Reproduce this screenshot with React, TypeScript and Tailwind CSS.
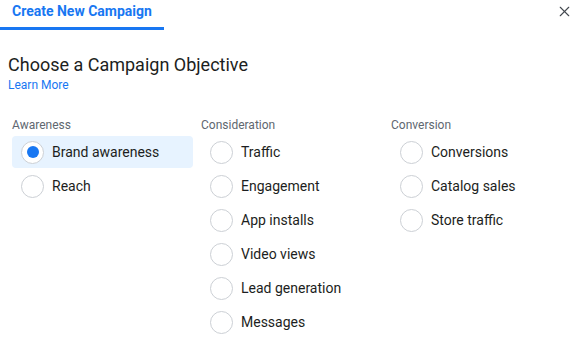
import { X } from "lucide-react";

const columns = [
  { label: "Awareness", items: ["Brand awareness", "Reach"] },
  {
    label: "Consideration",
    items: ["Traffic", "Engagement", "App installs", "Video views", "Lead generation", "Messages"],
  },
  { label: "Conversion", items: ["Conversions", "Catalog sales", "Store traffic"] },
];

function Radio({ checked }: { checked: boolean }) {
  return (
    <span className="grid h-[23px] w-[23px] shrink-0 place-items-center rounded-full border border-[#ccd0d5] bg-white">
      {checked && <span className="h-[12px] w-[12px] rounded-full bg-[#1877f2]" />}
    </span>
  );
}

export default function App() {
  return (
    <div className="h-[350px] w-[585px] bg-white font-['Roboto',sans-serif] text-[#1c1e21]">
      <div className="flex items-start justify-between">
        <div className="w-[164px] border-b-[3px] border-[#1877f2] pb-[5px] pl-[12px] pt-[1px] text-[14px] font-bold text-[#1877f2]">
          Create New Campaign
        </div>
        <button className="mr-[12px] mt-[3px] text-[#444950]">
          <X size={17} strokeWidth={1.6} />
        </button>
      </div>

      <div className="px-[8px] pt-[24px]">
        <h1 className="text-[18px] leading-[22px]">Choose a Campaign Objective</h1>
        <a className="block text-[12px] leading-[18px] text-[#1877f2]">Learn More</a>
      </div>

      <div className="mt-[23px] grid grid-cols-[189px_190px_190px] pl-[12px]">
        {columns.map((col) => (
          <div key={col.label} className="flex flex-col">
            <div className="mb-[3px] text-[12px] leading-[16px] text-[#606770]">{col.label}</div>
            <div className="flex flex-col gap-[2px]">
              {col.items.map((item) => {
                const checked = item === "Brand awareness";
                return (
                  <div
                    key={item}
                    className={`flex h-[32px] w-[181px] items-center gap-[8px] rounded-[4px] pl-[9px] text-[14px] ${
                      checked ? "bg-[#e7f3ff]" : ""
                    }`}
                  >
                    <Radio checked={checked} />
                    <span>{item}</span>
                  </div>
                );
              })}
            </div>
          </div>
        ))}
      </div>
    </div>
  );
}
